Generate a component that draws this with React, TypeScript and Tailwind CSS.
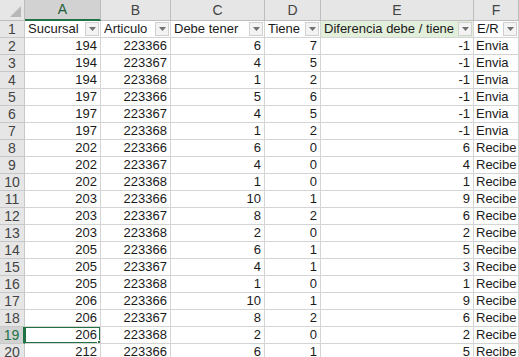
import React from 'react';

type Row = [number, number, number, number, number, string];

const rows: Row[] = [
  [194, 223366, 6, 7, -1, 'Envia'],
  [194, 223367, 4, 5, -1, 'Envia'],
  [194, 223368, 1, 2, -1, 'Envia'],
  [197, 223366, 5, 6, -1, 'Envia'],
  [197, 223367, 4, 5, -1, 'Envia'],
  [197, 223368, 1, 2, -1, 'Envia'],
  [202, 223366, 6, 0, 6, 'Recibe'],
  [202, 223367, 4, 0, 4, 'Recibe'],
  [202, 223368, 1, 0, 1, 'Recibe'],
  [203, 223366, 10, 1, 9, 'Recibe'],
  [203, 223367, 8, 2, 6, 'Recibe'],
  [203, 223368, 2, 0, 2, 'Recibe'],
  [205, 223366, 6, 1, 5, 'Recibe'],
  [205, 223367, 4, 1, 3, 'Recibe'],
  [205, 223368, 1, 0, 1, 'Recibe'],
  [206, 223366, 10, 1, 9, 'Recibe'],
  [206, 223367, 8, 2, 6, 'Recibe'],
  [206, 223368, 2, 0, 2, 'Recibe'],
  [212, 223366, 6, 1, 5, 'Recibe'],
];

const letters = ['A', 'B', 'C', 'D', 'E', 'F'];
const headers = ['Sucursal', 'Articulo', 'Debe tener', 'Tiene', 'Diferencia debe / tiene', 'E/R'];

const FilterButton = () => (
  <div className="flex h-[14px] w-[14px] shrink-0 items-center justify-center border border-[#d0d0d0] bg-[#f3f3f3]">
    <svg width="7" height="4" viewBox="0 0 7 4">
      <polygon points="0,0 7,0 3.5,4" fill="#707070" />
    </svg>
  </div>
);

const App: React.FC = () => {
  return (
    <div
      className="h-[357px] w-[519px] overflow-hidden bg-white text-[13px] text-[#1a1a1a]"
      style={{ fontFamily: '"Liberation Sans", Arial, sans-serif' }}
    >
      <div className="grid grid-cols-[25px_76px_70px_94px_56px_153px_45px] auto-rows-[17px] [grid-template-rows:21px]">
        {/* column letters */}
        <div className="relative border-b border-r border-[#bdbdbd] bg-[#e6e6e6]">
          <svg className="absolute bottom-[3px] right-[3px]" width="11" height="11" viewBox="0 0 11 11">
            <polygon points="11,0 11,11 0,11" fill="#b8b8b8" />
          </svg>
        </div>
        {letters.map((l, i) => (
          <div
            key={l}
            className={
              i === 0
                ? 'flex items-center justify-center border-b-2 border-r border-b-[#217346] border-r-[#bdbdbd] bg-[#d2d2d2] text-[14px] text-[#1e5c39]'
                : 'flex items-center justify-center border-b border-r border-[#bdbdbd] bg-[#e6e6e6] text-[14px] text-[#444]'
            }
          >
            {l}
          </div>
        ))}

        {/* row 1 - table header */}
        <div className="flex items-center justify-center border-b border-r border-[#c8c8c8] bg-[#e6e6e6] text-[14px] text-[#444]">
          1
        </div>
        {headers.map((h, i) => (
          <div
            key={h}
            className={
              'flex items-center gap-[2px] overflow-hidden whitespace-nowrap border-b border-r border-[#d4d4d4] pl-[3px] pr-[1px] ' +
              (i === 4 ? 'bg-[#e2efda]' : 'bg-white')
            }
          >
            <span className="flex-1 overflow-hidden">{h}</span>
            <FilterButton />
          </div>
        ))}

        {/* data rows */}
        {rows.map((r, idx) => {
          const n = idx + 2;
          const sel = n === 19;
          return (
            <React.Fragment key={n}>
              <div
                className={
                  sel
                    ? 'flex items-center justify-center border-b border-r-2 border-b-[#c8c8c8] border-r-[#217346] bg-[#d2d2d2] text-[14px] text-[#217346]'
                    : 'flex items-center justify-center border-b border-r border-[#c8c8c8] bg-[#e6e6e6] text-[14px] text-[#444]'
                }
              >
                {n}
              </div>
              {r.map((v, ci) => (
                <div
                  key={ci}
                  className={
                    'relative flex items-center whitespace-nowrap border-b border-r border-[#d4d4d4] ' +
                    (ci === 5 ? 'justify-start pl-[2px]' : 'justify-end overflow-hidden pr-[3px]')
                  }
                >
                  {v}
                  {sel && ci === 0 && (
                    <>
                      <div className="absolute inset-[-1px] border-2 border-[#217346]" />
                      <div className="absolute bottom-[-3px] right-[-3px] h-[6px] w-[6px] border border-white bg-[#217346]" />
                    </>
                  )}
                </div>
              ))}
            </React.Fragment>
          );
        })}
      </div>
    </div>
  );
};

export default App;
